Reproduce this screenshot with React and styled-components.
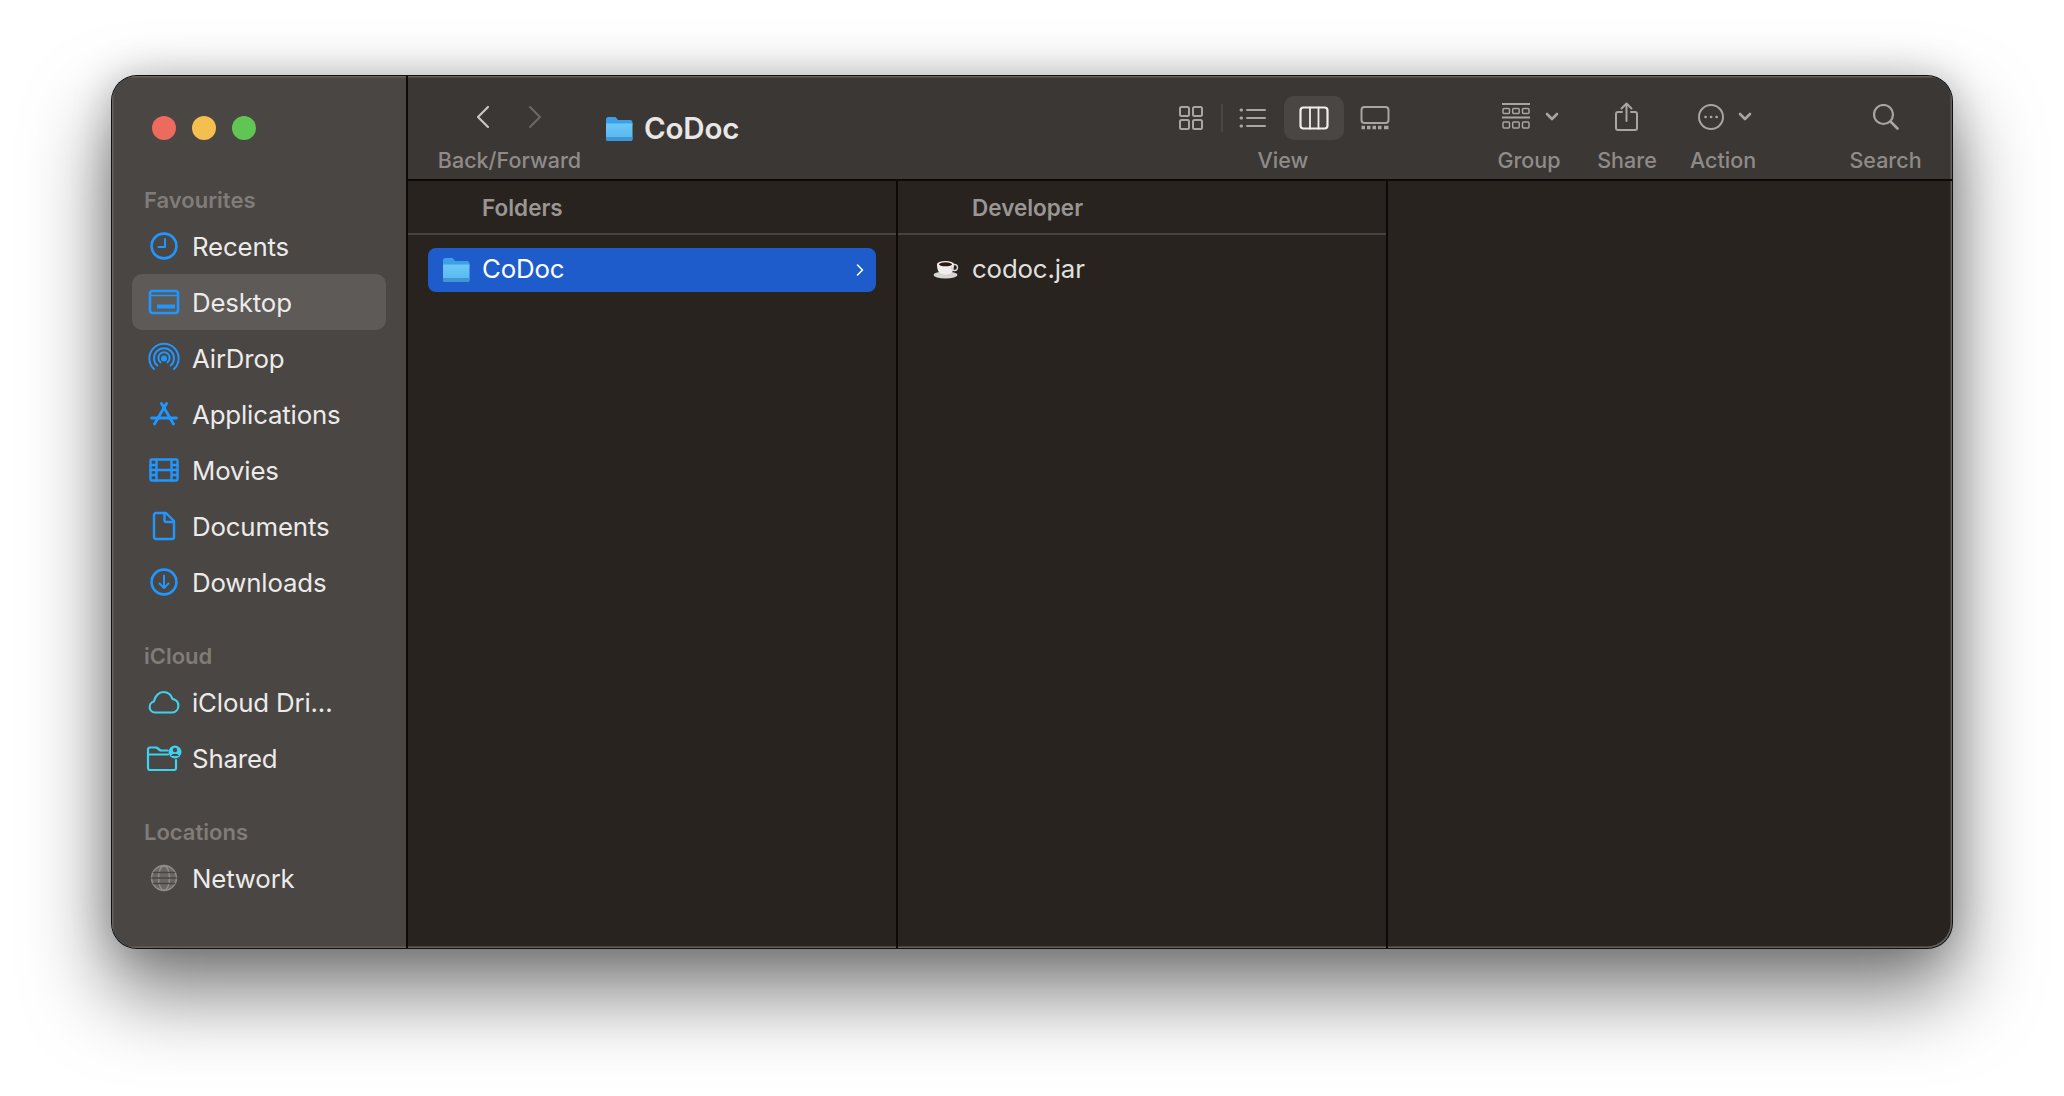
import React from "react";
import styled, { createGlobalStyle } from "styled-components";

const Global = createGlobalStyle`
  html, body { margin: 0; padding: 0; background: #fff; }
  body { font-family: Inter, "Liberation Sans", sans-serif; -webkit-font-smoothing: antialiased; }
`;
const Page = styled.div`
  width: 2064px; height: 1096px; box-sizing: border-box; padding: 76px 0 0 112px; overflow: hidden; background: #fff;
`;
const Win = styled.div`
  width: 1840px; height: 872px; box-sizing: border-box; display: flex; overflow: hidden;
  border-radius: 25px; background: #28231f;
  box-shadow: 0 0 0 1px #111, inset 0 0 0 1.5px #65615e, 0 42px 80px 4px rgba(0,0,0,.5), 0 0 40px rgba(0,0,0,.22);
`;
const Side = styled.aside`
  width: 296px; flex: none; box-sizing: border-box; background: #4a4643; padding: 39px 20px 0 20px;
  border-right: 2px solid #0b0a09; box-shadow: inset 1.5px 1.5px 0 #65615e, inset 0 -1.5px 0 #65615e;
`;
const Lights = styled.div`display: flex; gap: 16px; padding-left: 20px; height: 26px; margin-bottom: 44px;`;
const Light = styled.span`width: 24px; height: 24px; margin-top: 1px; border-radius: 50%; background: ${p => p.$c};`;
const Section = styled.div`
  height: 30px; line-height: 30px; padding-left: 12px; font-size: 22px; font-weight: 600; color: #807c79;
  margin-top: ${p => p.$mt || 0}px; margin-bottom: 3px;
`;
const Item = styled.div`
  height: 56px; display: flex; align-items: center; border-radius: 10px; padding-left: 12px; box-sizing: border-box;
  background: ${p => p.$active ? "#5e5a58" : "transparent"};
  color: #ecebe9; font-size: 25.8px; letter-spacing: -0.15px; white-space: nowrap;
`;
const IconSlot = styled.span`width: 36px; height: 36px; display: flex; align-items: center; justify-content: center; margin-right: 10px; margin-left: 2px;`;
const Main = styled.main`flex: 1; display: flex; flex-direction: column; min-width: 0;`;
const Toolbar = styled.header`
  height: 105px; flex: none; box-sizing: border-box; background: #3b3735; border-bottom: 2px solid #0b0a09;
  display: flex; padding-left: 30px; box-shadow: inset 0 1.5px 0 #65615e, inset -1.5px 0 0 #65615e;
`;
const Tool = styled.div`
  width: ${p => p.$w}px; margin-left: ${p => p.$ml || 0}px; margin-right: ${p => p.$mr || 0}px; flex: none; display: flex; flex-direction: column; align-items: center;
`;
const ToolIcons = styled.div`height: 71px; display: flex; align-items: flex-start; justify-content: ${p => p.$j || "center"}; width: 100%; box-sizing: border-box; padding-top: 20px;`;
const ToolLabel = styled.div`font-size: 21.5px; line-height: 26px; color: #8f8b88; font-weight: 500; white-space: nowrap;`;
const IconRow = styled.span`
  display: flex; align-items: center; gap: ${p => p.$gap || 0}px; padding-left: ${p => p.$pl || 0}px; padding-right: ${p => p.$pr || 0}px; margin-top: ${p => p.$mt || 0}px;
`;
const TitleBox = styled.div`display: flex; align-items: flex-start; margin-left: 24px; padding-top: 36px; color: #e8e7e5; font-size: 29.5px; font-weight: 600; line-height: 32px; letter-spacing: -0.2px;`;
const TitleIcon = styled.span`margin-right: 11px; margin-top: 3px;`;
const Spring = styled.div`flex: 1;`;
const Pill = styled.span`
  width: 60px; height: 44px; border-radius: 10px; flex: none; display: flex; align-items: center; justify-content: center;
  margin-left: ${p => p.$ml || 0}px;
  background: ${p => p.$on ? "#4a4644" : "transparent"};
`;
const Divider = styled.span`width: 2px; height: 28px; flex: none; background: #4b4745; margin-top: 8px;`;
const Browser = styled.div`flex: 1; display: grid; grid-template-columns: 490px 490px 1fr; min-height: 0;`;
const Col = styled.section`border-right: ${p => p.$last ? "none" : "2px solid #0b0a09"}; box-sizing: border-box; min-width: 0;`;
const ColHead = styled.div`
  height: 54px; box-sizing: border-box; padding-left: 74px; display: flex; align-items: center;
  border-bottom: 2px solid #46423e; font-size: 22.5px; font-weight: 600; color: #9a9693;
`;
const Row = styled.div`
  height: 44px; margin: 13px 20px 0 20px; border-radius: 8px; display: flex; align-items: center; padding-left: 14px; box-sizing: border-box;
  background: ${p => p.$sel ? "#1e5ccb" : "transparent"}; color: ${p => p.$sel ? "#fff" : "#e2e0de"}; font-size: 25.8px; letter-spacing: -0.15px;
`;
const RowIcon = styled.span`width: 40px; flex: none; display: flex; align-items: center;`;
const FileIcon = styled.span`width: 40px; flex: none; margin: -2px 3px 0 -3px; display: flex; align-items: center; justify-content: center; padding-right: 6px; box-sizing: border-box;`;
const RowName = styled.span`flex: 1; margin-top: -3px;`;
const RowChev = styled.span`margin-right: 12px; display: flex;`;

const S = ({ w, h = w, children, stroke = "#2196ff", sw = 2.6, fill = "none" }) => (
  <svg width={w} height={h} viewBox={`0 0 ${w} ${h}`} fill={fill} stroke={stroke} strokeWidth={sw} strokeLinecap="round" strokeLinejoin="round">{children}</svg>
);
const B = "#2196ff";
const Recents = () => <S w={28}><circle cx="14" cy="14" r="12.4"/><path d="M15 7v8H8.5" strokeWidth="2"/></S>;
const Desktop = () => <S w={32} h={26}><rect x="2" y="2" width="28" height="22" rx="2.5"/><path d="M2 6.5h28" strokeWidth="1.6"/><rect x="9" y="15.5" width="18" height="4" fill={B} stroke="none"/></S>;
const AirDrop = () => <S w={32} sw={2}><path d="M6 27A14.6 14.6 0 1 1 26 27"/><path d="M9.3 23.6A10 10 0 1 1 22.7 23.6"/><path d="M12.6 20.4A5.6 5.6 0 1 1 19.4 20.4"/><circle cx="16" cy="16.5" r="2" fill={B}/></S>;
const Apps = () => <S w={28} h={24} sw={2.8}><path d="M16.5 1.5 4.5 22"/><path d="M11.5 1.5 23.5 22"/><path d="M1.5 16h25"/></S>;
const Movies = () => <S w={30} h={24} sw={2.4}><rect x="1.5" y="1.5" width="27" height="21" rx="1.5"/><path d="M7.5 1.5v21M22.5 1.5v21M7.5 12h15M1.5 7H7.5M1.5 12H7.5M1.5 17H7.5M22.5 7h6M22.5 12h6M22.5 17h6"/></S>;
const Docs = () => <S w={24} h={30} sw={2.4}><path d="M4 2h10l8 8v16a2 2 0 0 1-2 2H4a2 2 0 0 1-2-2V4a2 2 0 0 1 2-2z"/><path d="M12.5 2v7a2 2 0 0 0 2 2H22"/></S>;
const Down = () => <S w={28}><circle cx="14" cy="14" r="12.4"/><path d="M14 7.5v12M9.5 15.5l4.5 4.5 4.5-4.5" strokeWidth="2"/></S>;
const C = "#3fd1f0";
const Cloud = () => <S w={34} h={24} stroke={C} sw={2.2}><path d="M8 22.5a5.6 5.6 0 0 1-1.2-11C8 6 12 2 16.5 2c4.4 0 7.6 2.8 9 6.8a7 7 0 0 1 .6 13.7z"/></S>;
const Shared = () => <S w={36} h={26} stroke={C} sw={2.2}><path d="M25 25H4a2 2 0 0 1-2-2V4.5a2 2 0 0 1 2-2h6.5l4 3h7"/><path d="M2 9.5h20"/><path d="M30 15v8a2 2 0 0 1-2 2h-3"/><circle cx="29" cy="7" r="6.5" fill={C} stroke="none"/><circle cx="29" cy="5" r="2.2" fill="#4a4643" stroke="none"/><path d="M25 11a4.2 3.2 0 0 1 8 0z" fill="#4a4643" stroke="none"/></S>;
const Globe = () => <S w={28} stroke="#8f8b88" sw={1.6} fill="#6a6664"><circle cx="14" cy="14" r="12.4"/><ellipse cx="14" cy="14" rx="5.5" ry="12.4" fill="none"/><path d="M3.5 8.5h21M2 14h24M3.5 19.5h21" stroke="#4a4643"/></S>;

const Folder = ({ w = 28, h = 26 }) => (
  <svg width={w} height={h} viewBox="0 0 28 26">
    <defs><linearGradient id="fg" x1="0" y1="0" x2="0" y2="1"><stop offset="0" stopColor="#6cc8f8"/><stop offset="1" stopColor="#55b5ee"/></linearGradient></defs>
    <path d="M1 3.5A2.5 2.5 0 0 1 3.5 1h6c1 0 1.6.4 2.2 1.2L13 4h12a2.5 2.5 0 0 1 2.5 2.5V9H1z" fill="#3d9fe6"/>
    <path d="M1 7.5h26.5v15.5a2 2 0 0 1-2 2H3a2 2 0 0 1-2-2z" fill="url(#fg)"/>
    <path d="M1 21h26.5v2a2 2 0 0 1-2 2H3a2 2 0 0 1-2-2z" fill="#3f96d6"/>
  </svg>
);
const Coffee = () => (
  <svg width="26" height="22" viewBox="0 0 26 22">
    <ellipse cx="12.5" cy="17" rx="12" ry="3.4" fill="#d8d6d4"/>
    <path d="M4 6c0 7 2 10.5 8.5 10.5S21 13 21 6z" fill="#f1efed"/>
    <circle cx="21.5" cy="9.5" r="3" fill="none" stroke="#d8d6d4" strokeWidth="1.4"/>
    <ellipse cx="12.5" cy="6" rx="8.5" ry="3" fill="#f1efed"/>
    <ellipse cx="12.5" cy="6.3" rx="6.6" ry="2" fill="#2c1a12"/>
  </svg>
);
const G = "#a8a5a2";
const Chev = ({ dir, c = "#c9c6c3" }) => <S w={14} h={24} stroke={c} sw={2.2}><path d={dir === "l" ? "M12 2 2 12l10 10" : "M2 2l10 10L2 22"}/></S>;
const Small = () => <S w={14} h={10} stroke={G} sw={2.6}><path d="M2 2l5 5 5-5"/></S>;

const items1 = [["Recents", Recents], ["Desktop", Desktop, true], ["AirDrop", AirDrop], ["Applications", Apps], ["Movies", Movies], ["Documents", Docs], ["Downloads", Down]];
const Entry = ({ name, I, active }) => <Item $active={active}><IconSlot><I /></IconSlot>{name}</Item>;

export default function App() {
  return (
    <Page>
      <Global />
      <Win>
        <Side>
          <Lights><Light $c="#ec6a5e"/><Light $c="#f4bf4f"/><Light $c="#61c554"/></Lights>
          <Section>Favourites</Section>
          {items1.map(([n, I, a]) => <Entry key={n} name={n} I={I} active={a} />)}
          <Section $mt={31}>iCloud</Section>
          <Entry name="iCloud Dri..." I={Cloud} />
          <Entry name="Shared" I={Shared} />
          <Section $mt={31}>Locations</Section>
          <Entry name="Network" I={Globe} />
        </Side>
        <Main>
          <Toolbar>
            <Tool $w={143}>
              <ToolIcons>
                <IconRow $gap={38} $mt={9} $pr={2}><Chev dir="l" /><Chev dir="r" c="#6b6764" /></IconRow>
              </ToolIcons>
              <ToolLabel>Back/Forward</ToolLabel>
            </Tool>
            <TitleBox><TitleIcon><Folder /></TitleIcon>CoDoc</TitleBox>
            <Spring />
            <Tool $w={244}>
              <ToolIcons>
                <Pill><S w={24} stroke={G} sw={2}><rect x="1" y="1" width="9" height="9" rx="1.5"/><rect x="14" y="1" width="9" height="9" rx="1.5"/><rect x="1" y="14" width="9" height="9" rx="1.5"/><rect x="14" y="14" width="9" height="9" rx="1.5"/></S></Pill>
                <Divider />
                <Pill><S w={28} h={22} stroke={G} sw={2}><path d="M8 3h18M8 11h18M8 19h18"/><path d="M2 3h.6M2 11h.6M2 19h.6" strokeWidth="3"/></S></Pill>
                <Pill $on $ml={1}><S w={30} h={24} stroke="#f0efed" sw={2.2}><rect x="1.5" y="1.5" width="27" height="21" rx="3"/><path d="M11 1.5v21M19.5 1.5v21" strokeWidth="1.8"/></S></Pill>
                <Pill $ml={1}><S w={30} h={24} stroke={G} sw={2}><rect x="1.5" y="1" width="27" height="16" rx="3"/><path d="M1.5 21.5h3.5M7 21.5h3.5M12.5 21.5h3.5M18 21.5h3.5M24 21.5h4.5" strokeWidth="3.4" strokeLinecap="butt"/></S></Pill>
              </ToolIcons>
              <ToolLabel>View</ToolLabel>
            </Tool>
            <Tool $w={66} $ml={91}>
              <ToolIcons $j="flex-start">
                <IconRow $gap={15} $pl={6} $mt={7}>
                  <S w={28} stroke={G} sw={1.5} h={28}><path d="M0 1h28M0 14.5h28" strokeWidth="2"/><rect x="1" y="5.5" width="6.5" height="5" rx="1"/><rect x="10.7" y="5.5" width="6.5" height="5" rx="1"/><rect x="20.5" y="5.5" width="6.5" height="5" rx="1"/><rect x="1" y="19" width="6.5" height="6" rx="1"/><rect x="10.7" y="19" width="6.5" height="6" rx="1"/><rect x="20.5" y="19" width="6.5" height="6" rx="1"/></S>
                  <Small />
                </IconRow>
              </ToolIcons>
              <ToolLabel>Group</ToolLabel>
            </Tool>
            <Tool $w={58} $ml={36}>
              <ToolIcons>
                <IconRow $mt={6}>
                  <S w={24} h={30} stroke={G} sw={2}><path d="M7 10H3a2 2 0 0 0-2 2v14a2 2 0 0 0 2 2h17a2 2 0 0 0 2-2V12a2 2 0 0 0-2-2h-4"/><path d="M11.5 19V2M6.5 6.5l5-5 5 5"/></S>
                </IconRow>
              </ToolIcons>
              <ToolLabel>Share</ToolLabel>
            </Tool>
            <Tool $w={66} $ml={34}>
              <ToolIcons $j="flex-start">
                <IconRow $gap={14} $pl={8} $mt={8}>
                  <S w={26} stroke={G} sw={2}><circle cx="13" cy="13" r="12"/><path d="M7.5 13h.2M13 13h.2M18.5 13h.2" strokeWidth="2.6"/></S>
                  <Small />
                </IconRow>
              </ToolIcons>
              <ToolLabel>Action</ToolLabel>
            </Tool>
            <Tool $w={73} $ml={93} $mr={30}>
              <ToolIcons>
                <IconRow $mt={8} $pl={1}>
                  <S w={26} h={26} stroke={G} sw={2.2}><circle cx="10.5" cy="10.5" r="9.5"/><path d="M17.5 17.5l7 7" strokeWidth="2.6"/></S>
                </IconRow>
              </ToolIcons>
              <ToolLabel>Search</ToolLabel>
            </Tool>
          </Toolbar>
          <Browser>
            <Col>
              <ColHead>Folders</ColHead>
              <Row $sel>
                <RowIcon><Folder /></RowIcon>
                <RowName>CoDoc</RowName>
                <RowChev><svg width="8" height="14" viewBox="0 0 8 14" fill="none" stroke="#fff" strokeWidth="1.6" strokeLinecap="round" strokeLinejoin="round"><path d="M1.5 2l5 5-5 5"/></svg></RowChev>
              </Row>
            </Col>
            <Col>
              <ColHead>Developer</ColHead>
              <Row>
                <FileIcon><Coffee /></FileIcon>
                <RowName>codoc.jar</RowName>
              </Row>
            </Col>
            <Col $last />
          </Browser>
        </Main>
      </Win>
    </Page>
  );
}
